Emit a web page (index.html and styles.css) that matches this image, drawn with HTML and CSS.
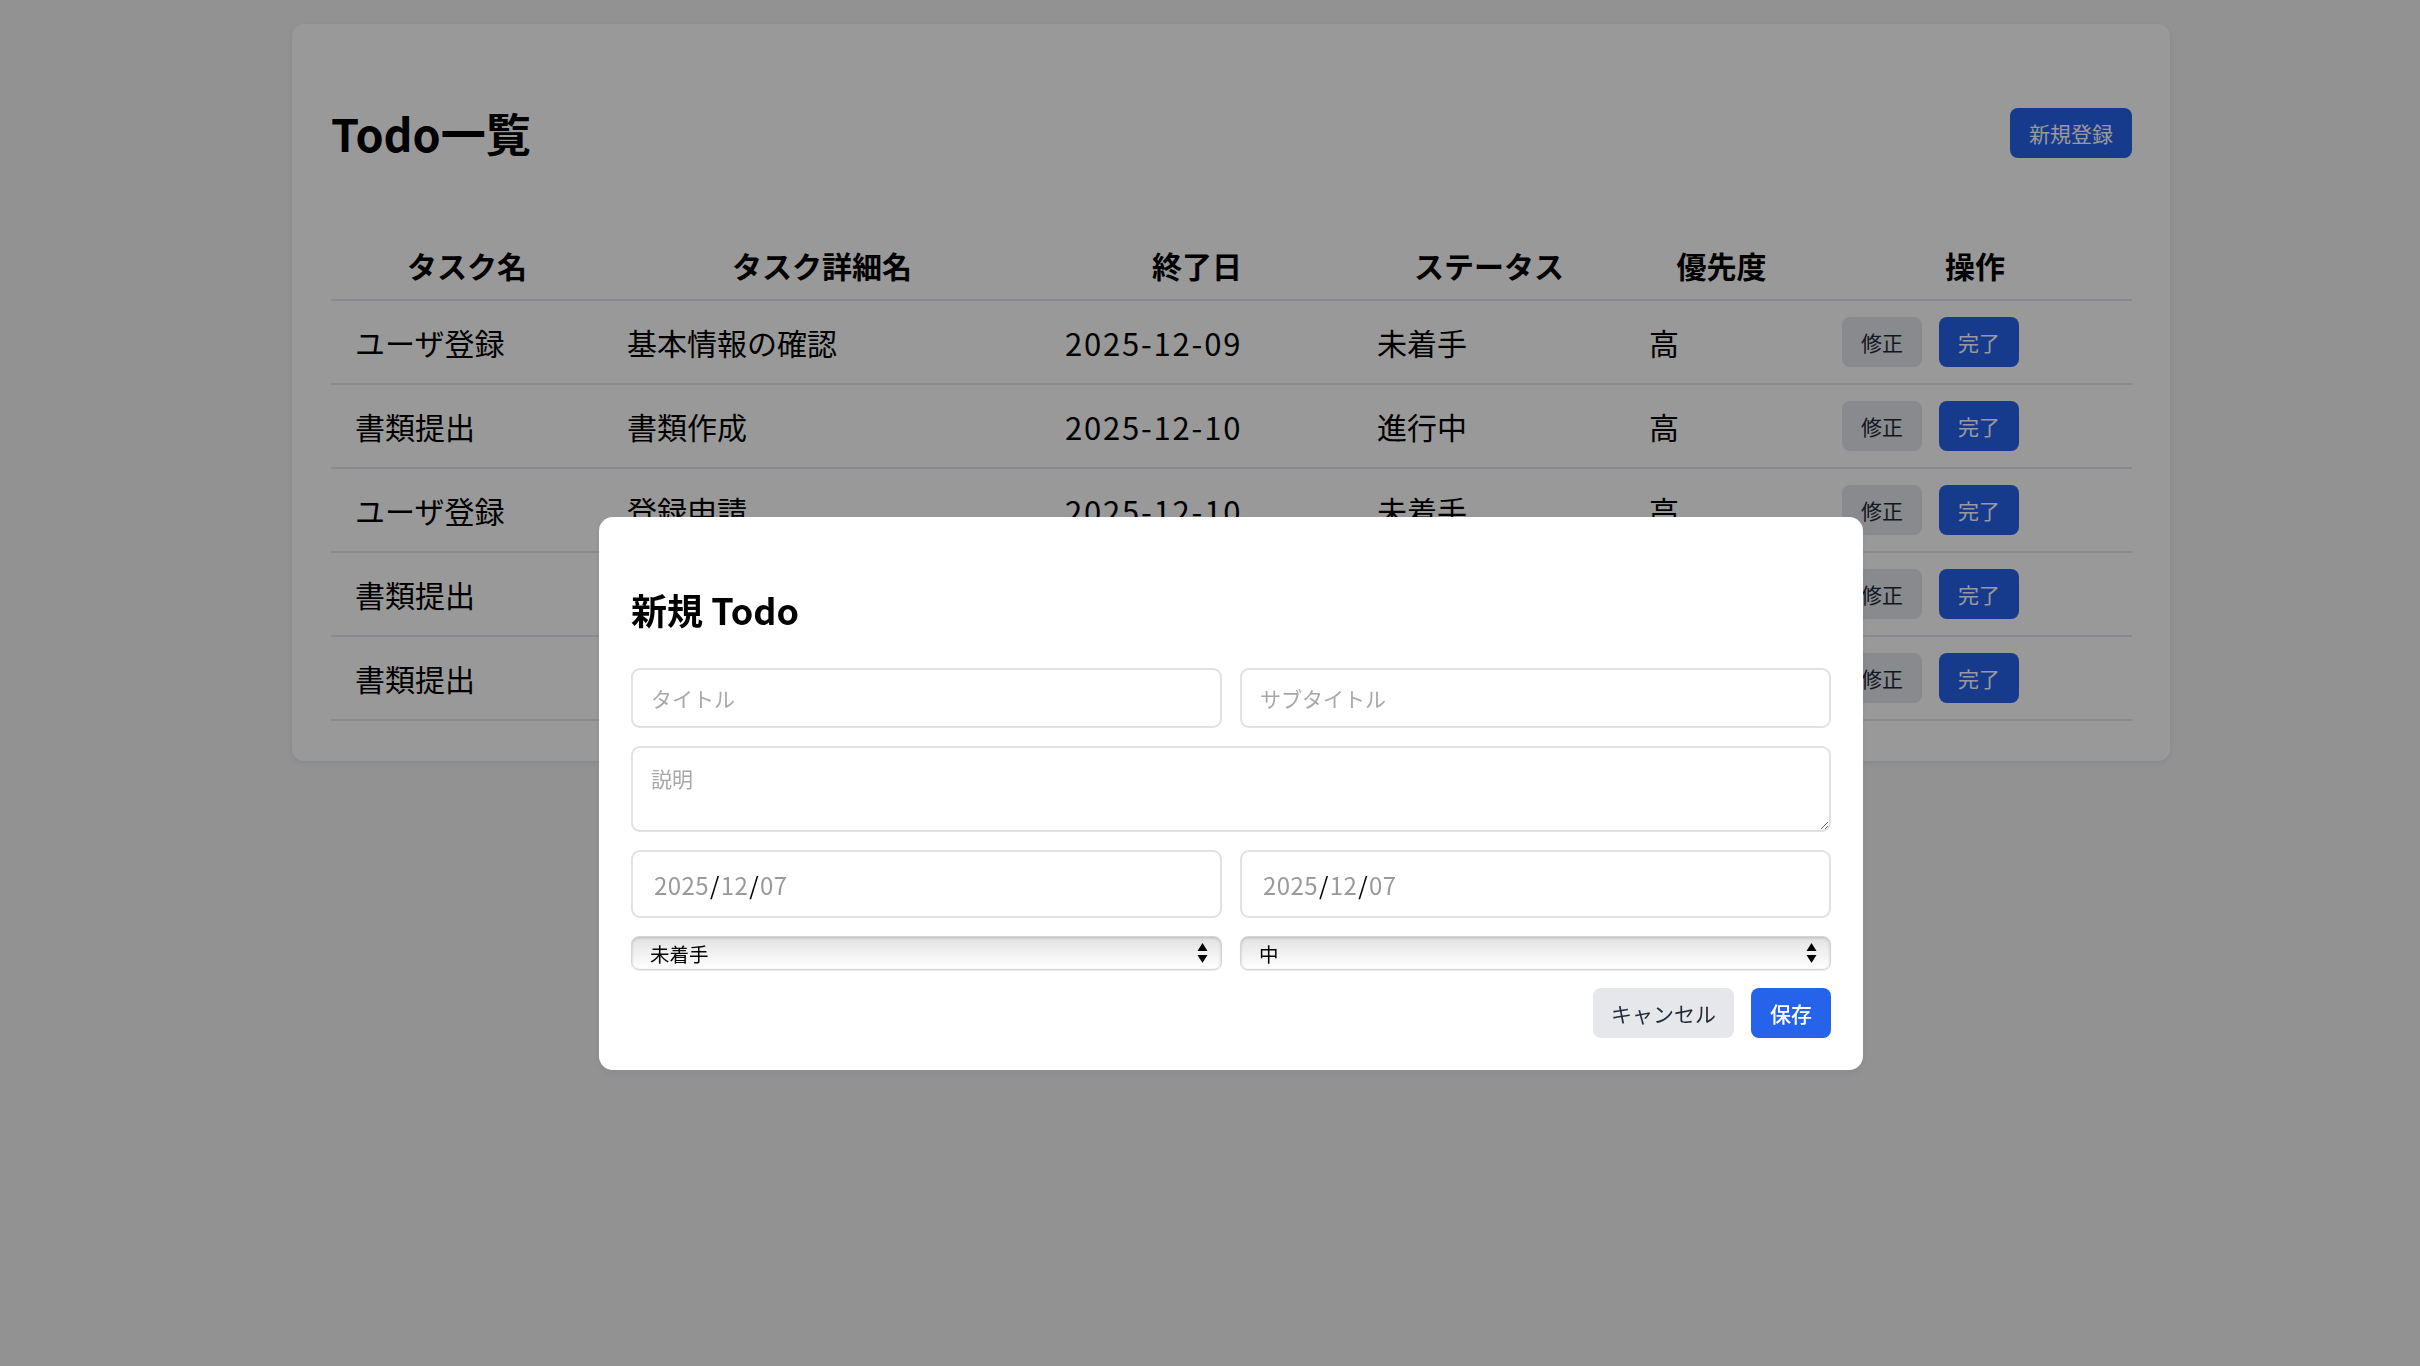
FILE: index.html
```html
<!DOCTYPE html>
<html lang="ja">
<head>
<meta charset="utf-8">
<title>Todo一覧</title>
<link rel="stylesheet" href="styles.css">
</head>
<body>
<div class="page">
  <div class="card">
    <div class="card-header">
      <h1 class="title">Todo一覧</h1>
      <button class="btn btn-primary">新規登録</button>
    </div>
    <table class="todo-table">
      <colgroup>
        <col class="c1"><col class="c2"><col class="c3"><col class="c4"><col class="c5"><col class="c6">
      </colgroup>
      <thead>
        <tr><th>タスク名</th><th>タスク詳細名</th><th>終了日</th><th>ステータス</th><th>優先度</th><th>操作</th></tr>
      </thead>
      <tbody>
        <tr><td>ユーザ登録</td><td>基本情報の確認</td><td class="num">2025-12-09</td><td>未着手</td><td>高</td><td><div class="actions"><button class="btn btn-gray">修正</button><button class="btn btn-primary">完了</button></div></td></tr>
        <tr><td>書類提出</td><td>書類作成</td><td class="num">2025-12-10</td><td>進行中</td><td>高</td><td><div class="actions"><button class="btn btn-gray">修正</button><button class="btn btn-primary">完了</button></div></td></tr>
        <tr><td>ユーザ登録</td><td>登録申請</td><td class="num">2025-12-10</td><td>未着手</td><td>高</td><td><div class="actions"><button class="btn btn-gray">修正</button><button class="btn btn-primary">完了</button></div></td></tr>
        <tr><td>書類提出</td><td></td><td class="num"></td><td></td><td></td><td><div class="actions"><button class="btn btn-gray">修正</button><button class="btn btn-primary">完了</button></div></td></tr>
        <tr><td>書類提出</td><td></td><td class="num"></td><td></td><td></td><td><div class="actions"><button class="btn btn-gray">修正</button><button class="btn btn-primary">完了</button></div></td></tr>
      </tbody>
    </table>
  </div>
</div>

<div class="overlay">
  <div class="modal">
    <h2 class="modal-title">新規 Todo</h2>
    <div class="form-grid">
      <input class="field" type="text" placeholder="タイトル">
      <input class="field" type="text" placeholder="サブタイトル">
      <textarea class="field area" placeholder="説明"></textarea>
      <div class="field date"><span class="seg">2025</span><span class="sep">/</span><span class="seg">12</span><span class="sep">/</span><span class="seg">07</span></div>
      <div class="field date"><span class="seg">2025</span><span class="sep">/</span><span class="seg">12</span><span class="sep">/</span><span class="seg">07</span></div>
      <div class="select-wrap">
        <select class="select"><option>未着手</option><option>進行中</option><option>完了</option></select>
        <svg class="select-arrow" width="11" height="20" viewBox="0 0 11 20"><path d="M5.5 0 L10.5 8 L0.5 8 Z M0.5 12 L10.5 12 L5.5 20 Z" fill="#000"/></svg>
      </div>
      <div class="select-wrap">
        <select class="select"><option>中</option><option>高</option><option>低</option></select>
        <svg class="select-arrow" width="11" height="20" viewBox="0 0 11 20"><path d="M5.5 0 L10.5 8 L0.5 8 Z M0.5 12 L10.5 12 L5.5 20 Z" fill="#000"/></svg>
      </div>
      <div class="modal-actions">
        <button class="btn btn-cancel">キャンセル</button>
        <button class="btn btn-save">保存</button>
      </div>
    </div>
  </div>
</div>
</body>
</html>
```

FILE: styles.css
```css
* { box-sizing: border-box; }

html, body {
  margin: 0;
  padding: 0;
}

body {
  background: #f3f4f6;
  font-family: "Noto Sans CJK JP", "Liberation Sans", sans-serif;
  color: #000;
  width: 2420px;
  height: 1366px;
  overflow: hidden;
}

.page {
  padding: 24px 0 0 42px;
}

.card {
  width: 1878px;
  margin: 0 auto;
  background: #fff;
  border-radius: 12px;
  padding: 82px 38px 40px 39px;
  box-shadow: 0 2px 6px rgba(0, 0, 0, 0.08);
}

.card-header {
  display: flex;
  align-items: center;
  justify-content: space-between;
  height: 54px;
  margin-bottom: 70px;
}

.title {
  margin: 0;
  font-size: 45px;
  line-height: 54px;
  font-weight: 700;
}

.btn {
  font-family: inherit;
  border: none;
  border-radius: 8px;
  height: 50px;
  padding: 0 19px;
  font-size: 21px;
  line-height: 50px;
  cursor: pointer;
}

.btn-primary {
  background: #2563eb;
  color: #fff;
}

.btn-gray {
  background: #e5e7eb;
  color: #1f2937;
}

.todo-table {
  width: 100%;
  border-collapse: collapse;
  table-layout: fixed;
}

.c1 { width: 272px; }
.c2 { width: 438px; }
.c3 { width: 312px; }
.c4 { width: 272px; }
.c5 { width: 193px; }
.c6 { width: 314px; }

.todo-table th {
  font-size: 30px;
  line-height: 45px;
  font-weight: 700;
  text-align: center;
  padding: 13px 24px 11px;
  border-bottom: 2px solid #e5e7eb;
}

.todo-table td {
  font-size: 30px;
  line-height: 45px;
  text-align: left;
  padding: 16px 24px 16px;
  border-bottom: 2px solid #e5e7eb;
  white-space: nowrap;
}

.todo-table td.num {
  font-size: 31px;
  letter-spacing: 1.8px;
}

.actions {
  display: flex;
  gap: 17px;
}

.actions .btn {
  width: 80px;
  padding: 0;
  letter-spacing: 0;
}

/* overlay + modal */
.overlay {
  position: fixed;
  inset: 0;
  background: rgba(0, 0, 0, 0.4);
  display: flex;
  justify-content: center;
  align-items: flex-start;
  padding: 517px 0 0 42px;
}

.modal {
  width: 1264px;
  background: #fff;
  border-radius: 14px;
  padding: 32px;
  box-shadow: 0 4px 10px rgba(0, 0, 0, 0.06);
}

.modal-title {
  margin: 36px 0 35px;
  font-size: 36px;
  line-height: 48px;
  font-weight: 700;
}

.form-grid {
  display: grid;
  grid-template-columns: 1fr 1fr;
  gap: 18px;
}

.field {
  display: block;
  width: 100%;
  height: 60px;
  border: 2px solid #e1e1e1;
  border-radius: 9px;
  padding: 0 18px;
  font-family: inherit;
  font-size: 21px;
  color: #000;
  background: #fff;
  outline: none;
}

.field::placeholder {
  color: #a8a8a8;
}

.area {
  grid-column: 1 / -1;
  height: 86px;
  padding: 15px 18px;
  line-height: 31px;
  resize: vertical;
}

.date {
  height: 68px;
  display: flex;
  align-items: center;
  padding: 0 21px;
  font-size: 24px;
  letter-spacing: 0.4px;
}

.date .seg {
  color: #9a9a9a;
}

.date .sep {
  color: #000;
  margin: 0 1px;
}

.select-wrap {
  position: relative;
  height: 34px;
}

.select {
  appearance: none;
  -webkit-appearance: none;
  width: 100%;
  height: 34px;
  border: 1px solid #d4d4d4;
  border-radius: 8px;
  padding: 0 40px 0 18px;
  font-family: inherit;
  font-size: 19.5px;
  color: #000;
  background: linear-gradient(#e2e2e2, #f2f2f2 55%, #ffffff);
  box-shadow: inset 0 1px 3px rgba(0, 0, 0, 0.18), 0 1px 1px rgba(0, 0, 0, 0.08);
  outline: none;
}

.select-arrow {
  position: absolute;
  right: 14px;
  top: 7px;
  pointer-events: none;
}

.modal-actions {
  grid-column: 1 / -1;
  display: flex;
  justify-content: flex-end;
  gap: 17px;
}

.btn-cancel {
  background: #e5e7eb;
  color: #1f2937;
  padding: 0 18px;
}

.btn-save {
  background: #2563eb;
  color: #fff;
  font-weight: 500;
  padding: 0 19px;
}
```
